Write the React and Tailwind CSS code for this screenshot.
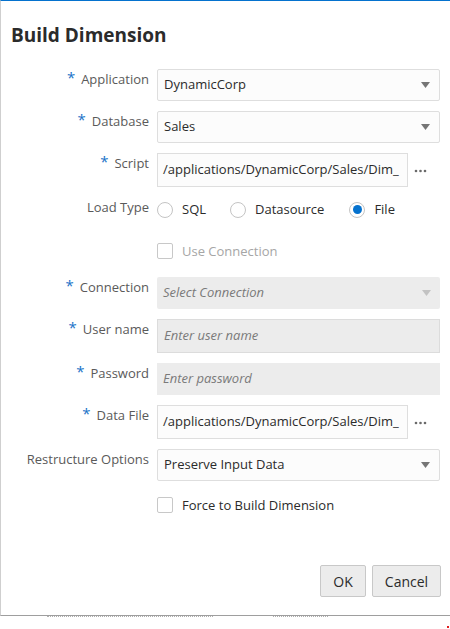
import React from "react";

const F = { fontFamily: '"Open Sans", "Noto Sans", sans-serif' };

function Label({ text, req }) {
  return (
    <div className="flex justify-end items-start h-[20px] leading-[20px] text-[13px] text-[#5a5a5a] whitespace-nowrap">
      {req && <span className="text-[#1a73c8] text-[15px] mr-[6px] leading-[16px]">*</span>}
      <span>{text}</span>
    </div>
  );
}

function Arrow({ light }) {
  return (
    <svg width="9" height="6" viewBox="0 0 9 6" className="shrink-0">
      <path d="M0 0 L9 0 L4.5 6 Z" fill={light ? "#c2c2c2" : "#767676"} />
    </svg>
  );
}

function Select({ value, disabled, italic }) {
  return (
    <div
      className={
        "h-[32px] flex items-center justify-between pl-[6px] pr-[9px] rounded-[2px] " +
        (disabled ? "bg-[#ececec]" : "bg-[#fcfcfc] border border-[#dedede]")
      }
    >
      <span className={"text-[13px] " + (italic ? "italic text-[#7a7a7a]" : "text-[#2b2b2b]")}>{value}</span>
      <Arrow light={disabled} />
    </div>
  );
}

function Dots() {
  return (
    <svg width="13" height="4" viewBox="0 0 13 4" className="ml-[6px] mt-[2px] shrink-0">
      <circle cx="2" cy="2" r="1.3" fill="#6a6a6a" />
      <circle cx="6.5" cy="2" r="1.3" fill="#6a6a6a" />
      <circle cx="11" cy="2" r="1.3" fill="#6a6a6a" />
    </svg>
  );
}

function PathInput({ value }) {
  return (
    <div className="flex items-center">
      <div className="w-[251px] h-[34px] flex items-center pl-[5px] pr-[3px] bg-[#fcfcfc] border border-[#dedede] overflow-hidden whitespace-nowrap">
        <span className="text-[13px] text-[#2b2b2b]">{value}</span>
      </div>
      <Dots />
    </div>
  );
}

function Radio({ checked, label, className }) {
  return (
    <div className={"flex items-center " + (className || "")}>
      <span className="w-[16px] h-[16px] rounded-full border border-[#c4c4c4] bg-white flex items-center justify-center">
        {checked && <span className="w-[9px] h-[9px] rounded-full bg-[#0572ce]" />}
      </span>
      <span className="ml-[9px] text-[13px] text-[#2b2b2b]">{label}</span>
    </div>
  );
}

function Check({ label, disabled }) {
  return (
    <div className="flex items-center pt-[6px]">
      <span className="w-[16px] h-[16px] rounded-[2px] border border-[#c8c8c8] bg-white" />
      <span className={"ml-[9px] text-[13px] leading-[16px] " + (disabled ? "text-[#a6a6a6]" : "text-[#2b2b2b]")}>{label}</span>
    </div>
  );
}

export default function App() {
  return (
    <div className="w-[450px] h-[629px] bg-white relative overflow-hidden" style={F}>
      <div className="h-[616px] border-t border-t-[#0572ce] border-l border-l-[#cfcfcf] border-b border-b-[#9e9e9e] flex flex-col">
        <h1 className="pl-[10px] pt-[20px] text-[19px] leading-[28px] font-bold text-[#2b2b2b]">Build Dimension</h1>
        <div className="mt-[20px] grid grid-cols-[148px_283px] gap-x-[8px] gap-y-[10px]">
          <Label text="Application" req />
          <Select value="DynamicCorp" />

          <Label text="Database" req />
          <Select value="Sales" />

          <Label text="Script" req />
          <PathInput value="/applications/DynamicCorp/Sales/Dim_" />

          <Label text="Load Type" />
          <div className="h-[30px] flex items-start pt-[3px]">
            <Radio label="SQL" />
            <Radio label="Datasource" className="ml-[24px]" />
            <Radio label="File" checked className="ml-[25px]" />
          </div>

          <div />
          <div className="h-[30px]">
            <Check label="Use Connection" disabled />
          </div>

          <Label text="Connection" req />
          <Select value="Select Connection" disabled italic />

          <Label text="User name" req />
          <div className="h-[34px] flex items-center pl-[6px] bg-[#ececec] border border-[#dcdcdc]">
            <span className="text-[13px] italic text-[#7a7a7a]">Enter user name</span>
          </div>

          <Label text="Password" req />
          <div className="h-[32px] flex items-center pl-[6px] bg-[#ececec]">
            <span className="text-[13px] italic text-[#7a7a7a]">Enter password</span>
          </div>

          <Label text="Data File" req />
          <PathInput value="/applications/DynamicCorp/Sales/Dim_" />

          <Label text="Restructure Options" />
          <Select value="Preserve Input Data" />

          <div />
          <div className="h-[30px]">
            <Check label="Force to Build Dimension" />
          </div>
        </div>
        <div className="flex-1" />
        <div className="flex justify-end gap-[6px] pr-[9px] pb-[18px]">
          <button className="w-[46px] h-[32px] bg-[#ececec] border border-[#c8c8c8] rounded-[2px] text-[14px] text-[#2b2b2b]">OK</button>
          <button className="w-[69px] h-[32px] bg-[#ececec] border border-[#c8c8c8] rounded-[2px] text-[14px] text-[#2b2b2b]">Cancel</button>
        </div>
      </div>
      <div className="h-[2px] overflow-hidden relative">
        <div className="absolute left-[47px] top-0 w-[166px] h-[1px] border-t border-dotted border-[#b0b0b0]" />
        <div className="absolute left-[273px] top-0 w-[55px] h-[1px] border-t border-dotted border-[#b0b0b0]" />
      </div>
      <div className="absolute left-[447px] top-[626px] w-[2px] h-[2px] bg-[#e02020]" />
    </div>
  );
}
